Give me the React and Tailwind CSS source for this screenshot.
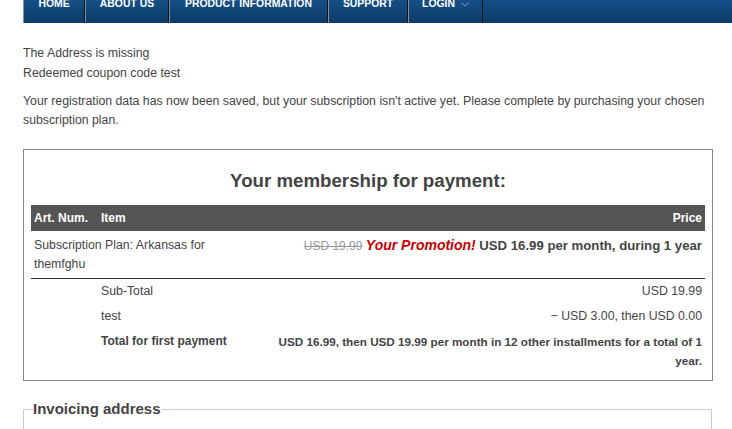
import React from "react";

const navItems = [
  { label: "HOME", w: "w-[62px]" },
  { label: "ABOUT US", w: "w-[84px]" },
  { label: "PRODUCT INFORMATION", w: "w-[159px]" },
  { label: "SUPPORT", w: "w-[80px]" },
  { label: "LOGIN", w: "w-[75px]", chevron: true },
];

export default function App() {
  return (
    <div className="min-h-[429px] bg-white font-['Liberation_Sans',Arial,sans-serif] text-[12.3px] text-[#444]">
      <div className="ml-[23px] flex h-[23px] overflow-hidden bg-gradient-to-b from-[#154f87] to-[#0c3b68]">
        {navItems.map((it) => (
          <div
            key={it.label}
            className={`${it.w} flex shrink-0 items-start justify-center border-l border-r border-l-[#7b8fa5] border-r-[#121212]`}
          >
            <span className="-mt-[2px] flex items-center gap-[6px] text-[10.4px] font-bold leading-[12px] text-white">
              {it.label}
              {it.chevron && (
                <svg width="8" height="5" viewBox="0 0 8 5" className="mt-[1px]">
                  <path d="M0.5 0.5 L4 4 L7.5 0.5" fill="none" stroke="#7f9bb8" strokeWidth="1" />
                </svg>
              )}
            </span>
          </div>
        ))}
        <div className="flex-1" />
      </div>

      <div className="mx-[23px] w-[690px] pt-[20px]">
        <div className="leading-[20px]">
          <div>The Address is missing</div>
          <div>Redeemed coupon code test</div>
        </div>
        <p className="mt-[9px] leading-[19px]">
          Your registration data has now been saved, but your subscription isn't active yet. Please complete by purchasing your chosen subscription plan.
        </p>

        <div className="mt-[19px] border border-[#888] px-[7px] pb-[7px] pt-[19px]">
          <h2 className="text-center text-[18.7px] font-bold leading-[24px] text-[#444]">
            Your membership for payment:
          </h2>
          <div className="mt-[12px]">
            <div className="flex h-[26px] items-center bg-[#555] text-[12px] font-bold text-white">
              <div className="w-[67px] px-[3px]">Art. Num.</div>
              <div className="px-[3px]">Item</div>
              <div className="flex-1 px-[3px] text-right">Price</div>
            </div>
            <div className="flex border-b border-[#333] pb-[4px] pt-[5px] leading-[19px]">
              <div className="w-[205px] shrink-0 px-[3px]">Subscription Plan: Arkansas for themfghu</div>
              <div className="flex-1 px-[3px] text-right">
                <span className="text-[12px] text-[#999] line-through">USD 19.99</span>{" "}
                <span className="text-[14px] font-bold italic text-[#c00]">Your Promotion!</span>{" "}
                <span className="text-[13.2px] font-bold">USD 16.99 per month, during 1 year</span>
              </div>
            </div>
            <div className="flex py-[3px] leading-[19px]">
              <div className="w-[67px] shrink-0" />
              <div className="w-[168px] shrink-0 px-[3px]">Sub-Total</div>
              <div className="flex-1 px-[3px] text-right">USD 19.99</div>
            </div>
            <div className="flex py-[3px] leading-[19px]">
              <div className="w-[67px] shrink-0" />
              <div className="w-[168px] shrink-0 px-[3px]">test</div>
              <div className="flex-1 px-[3px] text-right">− USD 3.00, then USD 0.00</div>
            </div>
            <div className="flex py-[3px] text-[12px] font-bold leading-[19px]">
              <div className="w-[67px] shrink-0" />
              <div className="w-[168px] shrink-0 px-[3px]">Total for first payment</div>
              <div className="flex-1 px-[3px] text-right text-[11.7px]">
                USD 16.99, then USD 19.99 per month in 12 other installments for a total of 1 year.
              </div>
            </div>
          </div>
        </div>

        <fieldset className="mt-[19px] h-[60px] w-[689px] border border-[#ccc] px-[9px]">
          <legend className="px-0 text-[15px] font-bold leading-[18px] text-[#444]">Invoicing address</legend>
        </fieldset>
      </div>
    </div>
  );
}
